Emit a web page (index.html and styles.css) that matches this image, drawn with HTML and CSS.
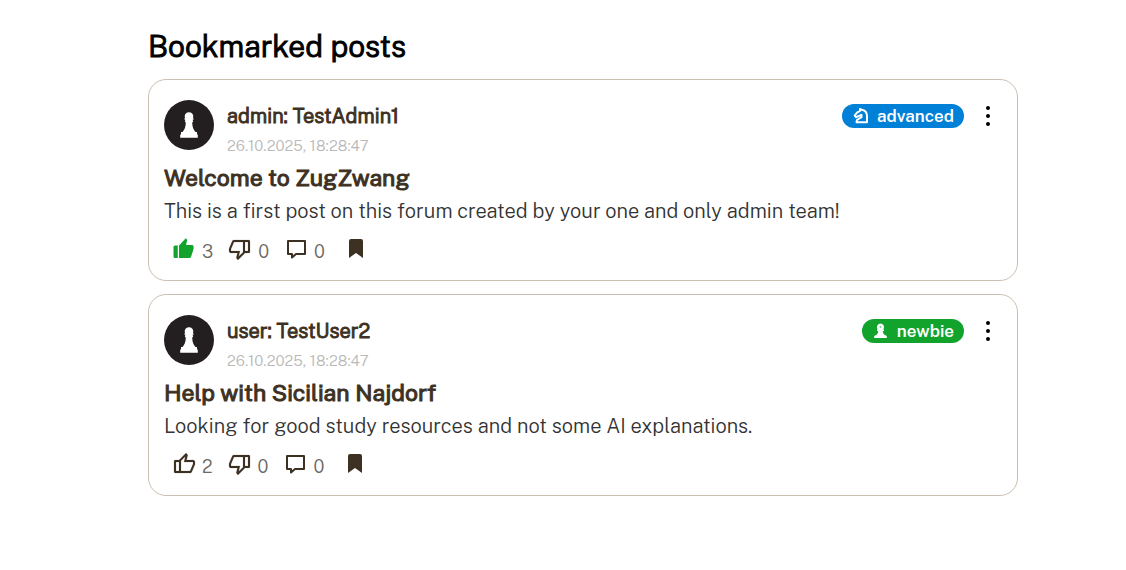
FILE: index.html
```html
<!DOCTYPE html>
<html lang="en">
<head>
<meta charset="utf-8">
<meta name="viewport" content="width=device-width, initial-scale=1">
<title>Bookmarked posts</title>
<link rel="stylesheet" href="styles.css">
</head>
<body>
<svg class="sprite" aria-hidden="true">
  <symbol id="up" viewBox="0 -960 960 960"><path stroke="currentColor" stroke-width="6" d="M720-120H280v-520l280-280 50 50q7 7 11.500 19t4.500 23v14l-44 174h258q32 0 56 24t24 56v80q0 7-2 15t-4 15L794-168q-9 20-30 34t-44 14Zm-360-80h360l120-280v-80H480l54-220-174 174v406Zm-80-440v80H160v360h120v80H130q-50 0-50-50v-420q0-50 50-50h150Z"/></symbol>
  <symbol id="up-filled" viewBox="0 -960 960 960"><path d="M700-120H280v-500l270-290 45 45q11 11 9 30l-40 195h240q60 0 60 60v80q0 15-6 30L760-160q-16 40-60 40ZM230-620v500H120q-60 0-60-60v-380q0-60 60-60h110Z"/></symbol>
  <symbol id="comment" viewBox="0 0 24 24"><path d="M4 4h17v13h-9l-4 3.500v-3.500H4z" fill="none" stroke="currentColor" stroke-width="2" stroke-linejoin="round"/></symbol>
  <symbol id="bookmark" viewBox="0 0 24 24"><path d="M5 21V4q0-2 2-2h10q2 0 2 2v17l-7-5z"/></symbol>
  <symbol id="dots" viewBox="0 0 24 24"><circle cx="12" cy="4" r="2"/><circle cx="12" cy="12" r="2"/><circle cx="12" cy="20" r="2"/></symbol>
  <symbol id="avatar" viewBox="0 0 50 50"><circle cx="25" cy="25" r="25" fill="#231f20"/><path fill="#fff" d="M25 12.300c2.600 0 4.300 1.800 4.300 4 0 .8-.2 1.400-.5 1.900h.7v1.500h-1l.7 1.500-1 1.500c.2 4 1 6.600 3.300 9.300h1.500v2.500h.8v3.200H16.200v-3.200h.8V32h1.500c2.300-2.700 3.100-5.300 3.300-9.300l-1-1.500.7-1.500h-1v-1.500h.7c-.3-.5-.5-1.100-.5-1.900 0-2.200 1.700-4 4.300-4z"/></symbol>
  <symbol id="knight" viewBox="0 0 16 16"><path d="M4 14.200h10.500V8C14.500 4.500 12 2.300 9 1.800L7.500.9v2L4.500 4.600 2.200 7.600l1.500 1.600L7 7.700l2-.9v2.400L4.500 12z" fill="none" stroke="currentColor" stroke-width="2" stroke-linejoin="round"/></symbol>
  <symbol id="pawn" viewBox="0 0 16 16"><path fill-rule="evenodd" d="M8 .5a3.600 3.600 0 0 1 3.200 5.200l-.7.800h1v1.500h-1.200c.1 1.800.5 2.600 1.300 3.500l2.700 1.500V15H1.700v-2l2.700-1.500c.8-.9 1.200-1.700 1.300-3.500H4.500V6.500h1l-.7-.8A3.600 3.600 0 0 1 8 .5zM7.200 3.400v1.200h1.600V3.400z"/></symbol>
</svg>
<main class="page">
  <h1 class="page-title">Bookmarked posts</h1>
  <div class="posts">
    <article class="post">
      <header class="post-header">
        <svg class="avatar" role="img" aria-label="Avatar"><use href="#avatar"/></svg>
        <div class="author">
          <span class="author-name">admin: TestAdmin1</span>
          <time class="date">26.10.2025, 18:28:47</time>
        </div>
        <span class="badge badge-advanced"><svg class="badge-icon" aria-hidden="true"><use href="#knight"/></svg>advanced</span>
        <button class="menu" type="button" aria-label="Post menu"><svg class="icon"><use href="#dots"/></svg></button>
      </header>
      <h2 class="post-title">Welcome to ZugZwang</h2>
      <p class="post-text">This is a first post on this forum created by your one and only admin team!</p>
      <footer class="actions">
        <button class="action" type="button" aria-label="Like"><svg class="icon liked"><use href="#up-filled"/></svg><span class="count">3</span></button>
        <button class="action" type="button" aria-label="Dislike"><svg class="icon down"><use href="#up"/></svg><span class="count">0</span></button>
        <button class="action" type="button" aria-label="Comments"><svg class="icon"><use href="#comment"/></svg><span class="count">0</span></button>
        <button class="action" type="button" aria-label="Remove bookmark"><svg class="icon"><use href="#bookmark"/></svg></button>
      </footer>
    </article>
    <article class="post">
      <header class="post-header">
        <svg class="avatar" role="img" aria-label="Avatar"><use href="#avatar"/></svg>
        <div class="author">
          <span class="author-name">user: TestUser2</span>
          <time class="date">26.10.2025, 18:28:47</time>
        </div>
        <span class="badge badge-newbie"><svg class="badge-icon" aria-hidden="true"><use href="#pawn"/></svg>newbie</span>
        <button class="menu" type="button" aria-label="Post menu"><svg class="icon"><use href="#dots"/></svg></button>
      </header>
      <h2 class="post-title">Help with Sicilian Najdorf</h2>
      <p class="post-text">Looking for good study resources and not some AI explanations.</p>
      <footer class="actions">
        <button class="action" type="button" aria-label="Like"><svg class="icon"><use href="#up"/></svg><span class="count">2</span></button>
        <button class="action" type="button" aria-label="Dislike"><svg class="icon down"><use href="#up"/></svg><span class="count">0</span></button>
        <button class="action" type="button" aria-label="Comments"><svg class="icon"><use href="#comment"/></svg><span class="count">0</span></button>
        <button class="action" type="button" aria-label="Remove bookmark"><svg class="icon"><use href="#bookmark"/></svg></button>
      </footer>
    </article>
  </div>
</main>
</body>
</html>
```
FILE: styles.css
```css
* { box-sizing: border-box; }
body { margin: 0; background: #fff; color: #3d3123; font-family: "Public Sans", Inter, "Liberation Sans", sans-serif; }
h1, h2, p { margin: 0; }
button { border: 0; padding: 0; background: none; color: inherit; font: inherit; cursor: pointer; }
.sprite { display: none; }
.page { padding: 28px 108px 28px 148px; }
.page-title { color: #000; font-size: 30px; font-weight: 300; line-height: 37px; -webkit-text-stroke: 1px; }
.posts { display: grid; gap: 13px; margin-top: 14px; }
.post { border: 1px solid #cbbfb2; border-radius: 18px; padding: 20px 15px 18px; }
.post-header { display: flex; align-items: flex-start; }
.avatar { width: 50px; height: 50px; flex: none; }
.author { display: flex; flex-direction: column; flex: 1; margin-left: 13px; }
.author-name { font-size: 20px; font-weight: 300; line-height: 32px; -webkit-text-stroke: 1px; }
.date { color: #b9b9b9; font-size: 15px; font-weight: 300; line-height: 28px; }
.badge { display: flex; align-items: center; gap: 8px; height: 24px; margin-top: 4px; padding: 0 10px; border-radius: 12px; color: #fff; font-size: 17px; font-weight: 600; }
.badge-advanced { background: #0080d6; }
.badge-newbie { background: #12a32c; }
.badge-icon { width: 17px; height: 16px; fill: currentColor; }
.icon { display: block; width: 24px; height: 24px; fill: currentColor; flex: none; }
.menu { margin: 4px 2px 0 12px; color: #000; }
.post-title { font-size: 23px; font-weight: 400; line-height: 36px; -webkit-text-stroke: 1px; }
.post-text { color: #333; font-size: 20px; font-weight: 300; line-height: 30px; }
.actions { display: flex; gap: 15px; margin: 10px 0 0 8px; }
.action { display: flex; align-items: center; gap: 6px; height: 26px; }
.action:last-child { margin-left: 4px; }
.count { color: #6d6861; font-size: 18px; font-weight: 300; line-height: 24px; padding-top: 5px; }
.liked { color: #12a32c; }
.down { transform: rotate(180deg); }
```
